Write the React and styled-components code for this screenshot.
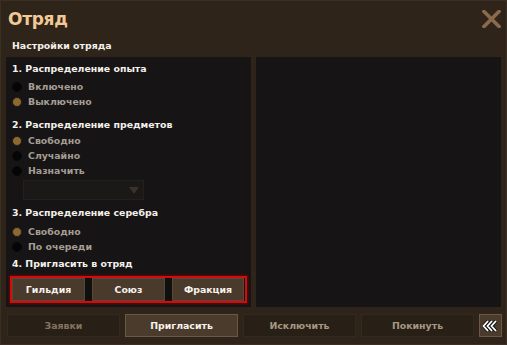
import React from "react";
import styled, { createGlobalStyle } from "styled-components";

const Global = createGlobalStyle`
  html, body { margin: 0; padding: 0; background: #2e2319; }
  #root { width: 507px; height: 345px; }
  * { box-sizing: border-box; }
`;

const Frame = styled.div`
  width: 507px;
  height: 345px;
  background: #2e2419;
  border: 1px solid #3b2f23;
  display: flex;
  flex-direction: column;
  font-family: "DejaVu Sans", Verdana, sans-serif;
  font-weight: bold;
  overflow: hidden;
`;

const Header = styled.div`
  height: 34px;
  display: flex;
  align-items: center;
  justify-content: space-between;
  padding: 0 5px 0 7px;
`;

const Title = styled.div`
  color: #f2c996;
  font-size: 17px;
  letter-spacing: -0.3px;
  margin-top: 1px;
`;

const Close = styled.button`
  width: 20px;
  height: 20px;
  padding: 0;
  border: 0;
  background: none;
  display: flex;
  align-items: center;
  justify-content: center;
  margin-top: 1px;
`;

const Subtitle = styled.div`
  height: 22px;
  line-height: 22px;
  padding-left: 11px;
  color: #f4f0ea;
  font-size: 9.4px;
`;

const Panels = styled.div`
  display: flex;
  gap: 5px;
  padding: 0 5px;
  height: 250px;
`;

const Panel = styled.div`
  width: 245px;
  background: #161414;
  padding: 5px 6px 0;
  display: flex;
  flex-direction: column;
`;

const Heading = styled.div`
  height: 14px;
  line-height: 14px;
  color: #f4f1ec;
  font-size: 9.4px;
  margin-top: ${(p) => p.$mt || 0}px;
`;

const RadioRow = styled.div`
  height: 15px;
  display: flex;
  align-items: center;
  gap: 6px;
  color: #a59d93;
  font-size: 9.4px;
  margin-top: ${(p) => p.$mt || 0}px;
`;

const Dot = styled.span`
  width: 10px;
  height: 10px;
  border-radius: 50%;
  background: ${(p) => (p.$on ? "#8d6932" : "#060505")};
  border: ${(p) => (p.$on ? "1.5px solid #241d14" : "1px solid #090807")};
  flex: none;
`;

const Select = styled.div`
  margin: 2px 0 0 11px;
  width: 121px;
  height: 20px;
  background: #1b1918;
  border: 1px solid #221f1c;
  display: flex;
  align-items: center;
  justify-content: flex-end;
  padding-right: 4px;
`;

const InviteBox = styled.div`
  margin: 5px -2px 0;
  height: 27px;
  border: 2px solid #d20c0c;
  box-shadow: 0 0 2px 1px rgba(150, 0, 0, 0.6);
  background: #101010;
  display: flex;
  gap: 7px;
`;

const InviteButton = styled.button`
  flex: ${(p) => (p.$last ? "72px" : "73px")} 0 0;
  height: 23px;
  background: #4a3a2c;
  border: 1px solid #5a4836;
  color: #f6f2ec;
  font-family: inherit;
  font-weight: bold;
  font-size: 9.4px;
  padding: 0;
`;

const Bottom = styled.div`
  display: flex;
  gap: 5px;
  padding: 7px 0 0 6px;
`;

const TabButton = styled.button`
  width: ${(p) => (p.$icon ? "23px" : "113px")};
  height: 23px;
  padding: 0;
  font-family: inherit;
  font-weight: bold;
  font-size: 9.4px;
  background: ${(p) => (p.$active ? "#4b3b2c" : "#281f17")};
  border: 1px solid ${(p) => (p.$active ? "#6a5744" : "#33291f")};
  color: ${(p) => (p.$active ? "#f6f2ec" : p.$dim ? "#857460" : "#a69782")};
  display: flex;
  align-items: center;
  justify-content: center;
`;

const Radio = ({ on, children, mt }) => (
  <RadioRow $mt={mt}>
    <Dot $on={on} />
    {children}
  </RadioRow>
);

export default function App() {
  return (
    <>
      <Global />
      <Frame>
        <Header>
          <Title>Отряд</Title>
          <Close aria-label="close">
            <svg width="19" height="18" viewBox="0 0 19 18">
              <path d="M2 1.5 L17 16.5 M17 1.5 L2 16.5" stroke="#8b6a4b" strokeWidth="3.6" strokeLinecap="square" />
            </svg>
          </Close>
        </Header>
        <Subtitle>Настройки отряда</Subtitle>
        <Panels>
          <Panel>
            <Heading>1. Распределение опыта</Heading>
            <Radio mt={3}>Включено</Radio>
            <Radio on>Выключено</Radio>
            <Heading $mt={9}>2. Распределение предметов</Heading>
            <Radio on mt={1}>Свободно</Radio>
            <Radio>Случайно</Radio>
            <Radio>Назначить</Radio>
            <Select>
              <svg width="10" height="7" viewBox="0 0 10 7">
                <path d="M0 0 H10 L5 7 Z" fill="#3c3128" />
              </svg>
            </Select>
            <Heading $mt={6}>3. Распределение серебра</Heading>
            <Radio on mt={4}>Свободно</Radio>
            <Radio>По очереди</Radio>
            <Heading $mt={3}>4. Пригласить в отряд</Heading>
            <InviteBox>
              <InviteButton>Гильдия</InviteButton>
              <InviteButton>Союз</InviteButton>
              <InviteButton $last>Фракция</InviteButton>
            </InviteBox>
          </Panel>
          <Panel />
        </Panels>
        <Bottom>
          <TabButton $dim>Заявки</TabButton>
          <TabButton $active>Пригласить</TabButton>
          <TabButton>Исключить</TabButton>
          <TabButton>Покинуть</TabButton>
          <TabButton $active $icon aria-label="collapse">
            <svg width="17" height="12" viewBox="0 0 17 12">
              <g fill="none" strokeLinejoin="miter">
                <path d="M6 1 L1.5 6 L6 11 M10 1 L5.5 6 L10 11 M14 1 L9.5 6 L14 11" stroke="#111" strokeWidth="3.4" />
                <path d="M6 1 L1.5 6 L6 11 M10 1 L5.5 6 L10 11 M14 1 L9.5 6 L14 11" stroke="#fff" strokeWidth="1.8" />
              </g>
            </svg>
          </TabButton>
        </Bottom>
      </Frame>
    </>
  );
}
